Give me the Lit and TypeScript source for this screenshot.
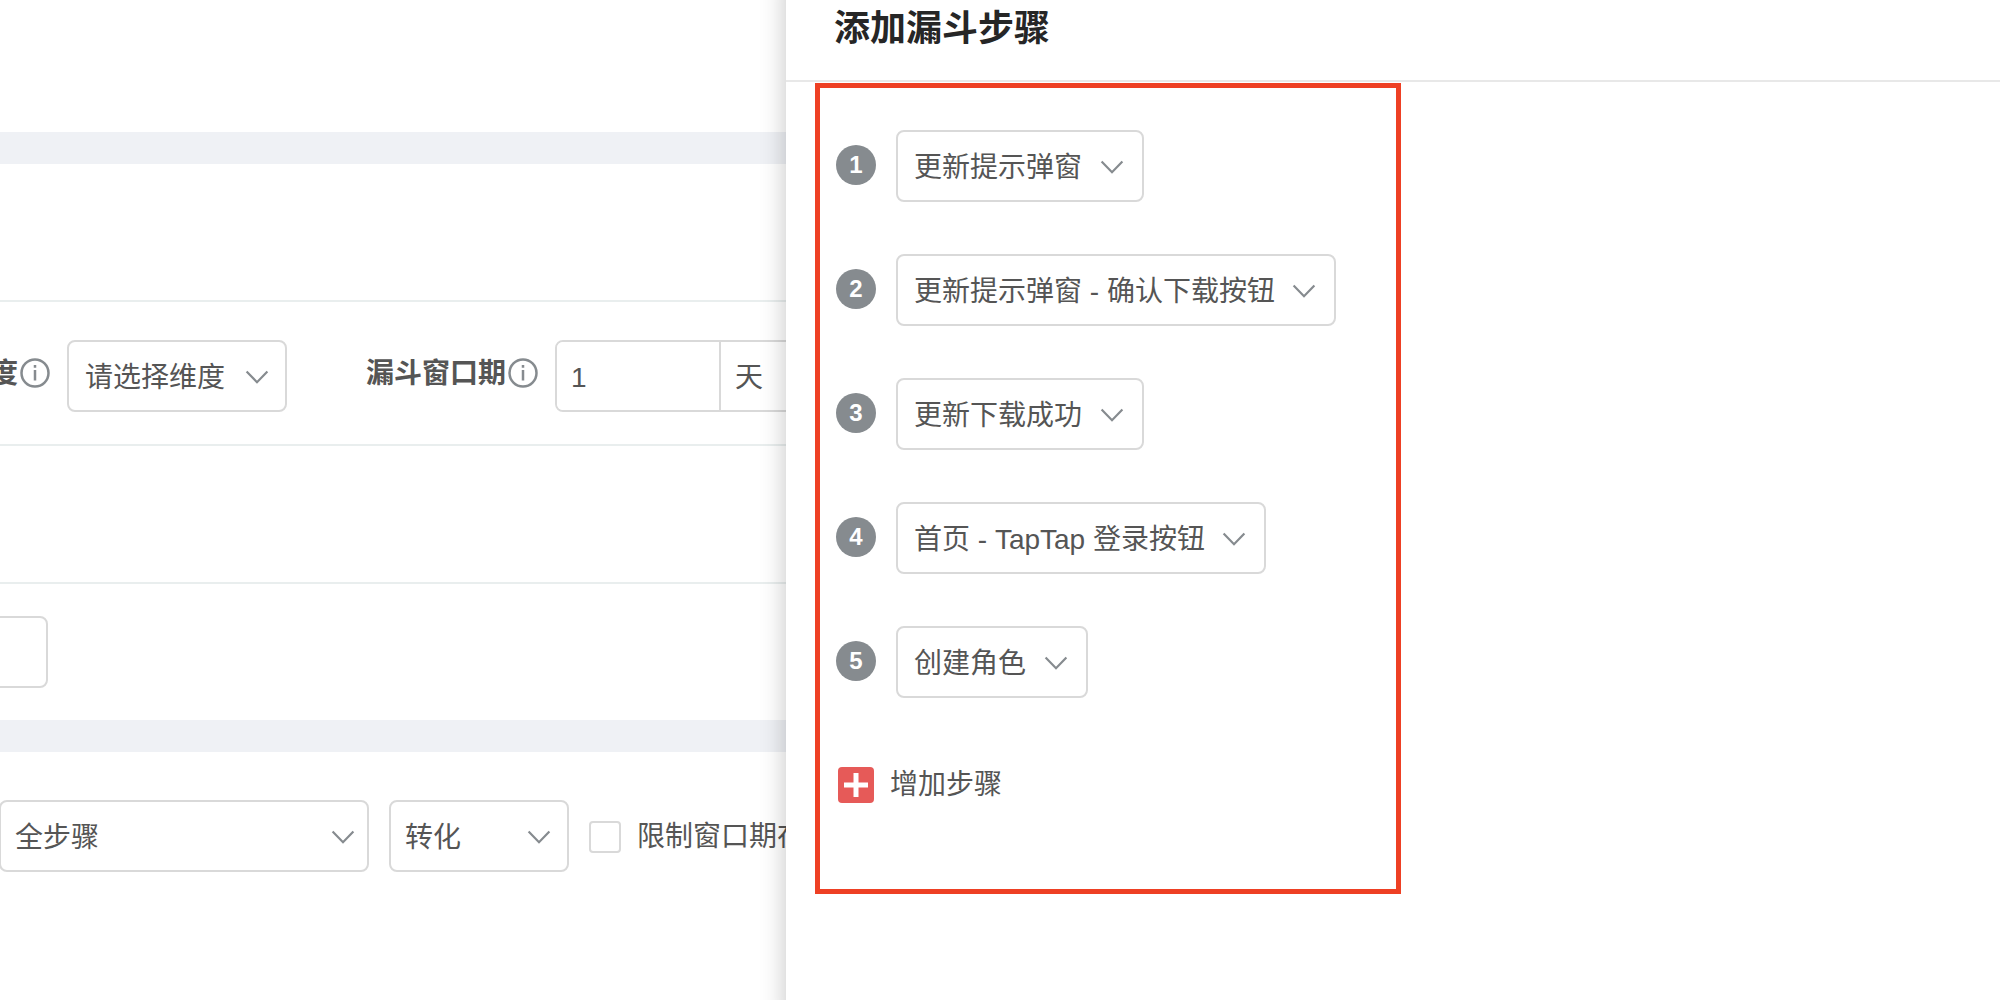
import { LitElement, html, css, svg } from "lit";
import { customElement, property } from "lit/decorators.js";

@customElement("drop-down")
class DropDown extends LitElement {
  @property() label = "";
  @property() value = "";

  static styles = css`
    :host {
      display: inline-grid;
      flex: none;
      color: #555;
    }
    .field,
    .chevron {
      grid-area: 1 / 1;
    }
    .field {
      box-sizing: border-box;
      width: 100%;
      height: 72px;
      margin: 0;
      padding: 4px 59px 0 var(--inset, 16px);
      appearance: none;
      border: 2px solid #d9d9d9;
      border-radius: 8px;
      background: #fff;
      color: inherit;
      font: inherit;
    }
    .chevron {
      place-self: center end;
      width: 24px;
      height: 16px;
      margin: 2px var(--chevron-inset, 20px) 0 0;
      fill: none;
      stroke: #868b8f;
      stroke-width: 2.2;
      pointer-events: none;
    }
  `;

  render() {
    return html`
      <select class="field" aria-label=${this.label}>
        <option>${this.value}</option>
      </select>
      <svg class="chevron" viewBox="0 0 24 16" aria-hidden="true">
        <path d="M1.6 2.6 12 13.2 22.4 2.6" />
      </svg>
    `;
  }
}

const infoIcon = svg`
  <circle cx="15" cy="15" r="13.5" />
  <path d="M15 12v10.5M15 7v2.8" />
`;

@customElement("app-root")
class AppRoot extends LitElement {
  private steps = [
    "更新提示弹窗",
    "更新提示弹窗 - 确认下载按钮",
    "更新下载成功",
    "首页 - TapTap 登录按钮",
    "创建角色",
  ];

  static styles = css`
    :host {
      display: block;
      font: 28px/40px "Liberation Sans", "Noto Sans CJK SC", sans-serif;
      color: #555;
      background: #fff;
    }
    .layout {
      display: grid;
      grid-template-columns: 39.3% minmax(0, 1fr);
      min-height: 100vh;
      overflow: hidden;
    }
    .analysis {
      min-width: 0;
      overflow: hidden;
      white-space: nowrap;
    }
    .band {
      height: 32px;
      background: #eff1f5;
    }
    .intro {
      height: 132px;
    }
    .row {
      display: flex;
      align-items: center;
      box-sizing: border-box;
      height: 138px;
    }
    .ruled {
      border-bottom: 2px solid #e9eeee;
    }
    .filters {
      height: 144px;
      padding-top: 6px;
    }
    .caption {
      display: flex;
      align-items: center;
      gap: 2px;
      flex: none;
      margin: 0 17px 4px 79px;
      font-weight: bold;
    }
    .first {
      margin-left: -10px;
    }
    .info {
      width: 30px;
      height: 30px;
      margin-bottom: 2px;
      fill: none;
      stroke: #868b8f;
      stroke-width: 2.5;
    }
    .dimension,
    .metric {
      --chevron-inset: 18px;
    }
    .window {
      display: flex;
      flex: none;
      box-sizing: border-box;
      width: 260px;
      height: 72px;
      border: 2px solid #d9d9d9;
      border-radius: 8px;
    }
    .days {
      box-sizing: border-box;
      width: 164px;
      padding: 4px 14px 0;
      border: 0;
      border-right: 2px solid #d9d9d9;
      border-radius: 6px 0 0 6px;
      background: #fff;
      color: inherit;
      font: inherit;
    }
    .unit {
      padding: 16px 14px 12px;
    }
    .search {
      box-sizing: border-box;
      width: 148px;
      height: 72px;
      margin-left: -100px;
      border: 2px solid #d9d9d9;
      border-radius: 8px;
      background: #fff;
      font: inherit;
    }
    .tags {
      height: 136px;
    }
    .results {
      gap: 20px;
      height: 168px;
    }
    .scope {
      width: 370px;
      margin-left: -1px;
      --inset: 14px;
      --chevron-inset: 14px;
    }
    .metric {
      width: 180px;
      --inset: 14px;
    }
    .limit {
      display: flex;
      align-items: center;
      gap: 16px;
      padding-top: 2px;
    }
    .tick {
      flex: none;
      width: 32px;
      height: 32px;
      margin: 0;
      appearance: none;
      border: 2px solid #d9d9d9;
      border-radius: 4px;
      background: #fff;
      box-sizing: border-box;
    }
    .drawer {
      position: relative;
      background: #fff;
      box-shadow: 24px 0 24px 24px rgba(0, 0, 0, 0.24);
    }
    .head {
      display: flex;
      align-items: flex-start;
      box-sizing: border-box;
      height: 82px;
      padding: 3px 48px 0;
      border-bottom: 2px solid #e8e8e8;
    }
    .title {
      margin: 0;
      font-size: 36px;
      line-height: 52px;
      color: #262626;
    }
    .steps {
      box-sizing: border-box;
      width: min(100% - 29px, 586px);
      margin: 1px 0 0 29px;
      padding: 42px 16px 86px;
      border: 5px solid #ee4024;
    }
    .list {
      display: grid;
      gap: 52px;
      margin: 0 0 69px;
      padding: 0;
      list-style: none;
    }
    .step {
      display: flex;
      align-items: center;
      gap: 20px;
    }
    .number {
      flex: none;
      width: 40px;
      margin-bottom: 2px;
      border-radius: 50%;
      background: #868b8f;
      color: #fff;
      font-size: 24px;
      font-weight: bold;
      text-align: center;
    }
    .add {
      display: flex;
      align-items: center;
      gap: 16px;
      height: 36px;
      padding: 0 2px;
      border: 0;
      background: none;
      color: inherit;
      font: inherit;
    }
    .plus {
      width: 36px;
      height: 36px;
      border-radius: 4px;
      background: #e65a58;
      stroke: #fff;
      stroke-width: 5;
    }
  `;

  render() {
    return html`
      <div class="layout">
        <main class="analysis">
          <div class="intro"></div>
          <div class="band"></div>
          <div class="row ruled"></div>
          <div class="row ruled filters">
            <span class="caption first">
              度<svg class="info" viewBox="0 0 30 30" aria-hidden="true">${infoIcon}</svg>
            </span>
            <drop-down class="dimension" label="维度" value="请选择维度"></drop-down>
            <label class="caption" for="days">
              漏斗窗口期<svg class="info" viewBox="0 0 30 30" aria-hidden="true">${infoIcon}</svg>
            </label>
            <div class="window">
              <input class="days" id="days" type="text" value="1" />
              <span class="unit">天</span>
            </div>
          </div>
          <div class="row ruled"></div>
          <div class="row tags">
            <input class="search" type="text" aria-label="筛选" />
          </div>
          <div class="band"></div>
          <div class="row results">
            <drop-down class="scope" label="步骤" value="全步骤"></drop-down>
            <drop-down class="metric" label="指标" value="转化"></drop-down>
            <label class="limit">
              <input class="tick" type="checkbox" />限制窗口期在
            </label>
          </div>
        </main>
        <aside class="drawer">
          <header class="head">
            <h1 class="title">添加漏斗步骤</h1>
          </header>
          <section class="steps">
            <ol class="list">
              ${this.steps.map(
                (name, i) => html`
                  <li class="step">
                    <span class="number">${i + 1}</span>
                    <drop-down label="步骤 ${i + 1}" value=${name}></drop-down>
                  </li>
                `,
              )}
            </ol>
            <button class="add" type="button">
              <svg class="plus" viewBox="0 0 36 36" aria-hidden="true">
                <path d="M6 18h24M18 6v24" />
              </svg>
              增加步骤
            </button>
          </section>
        </aside>
      </div>
    `;
  }
}
